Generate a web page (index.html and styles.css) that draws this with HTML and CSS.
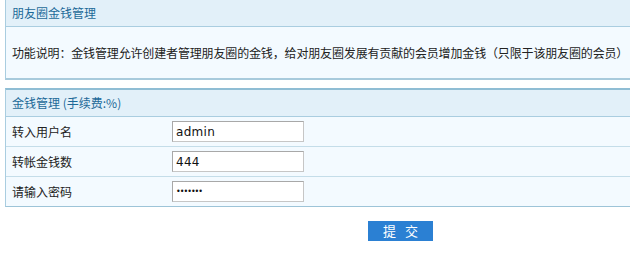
FILE: index.html
```html
<!DOCTYPE html>
<html lang="zh-CN">
<head>
<meta charset="utf-8">
<title>朋友圈金钱管理</title>
<link rel="stylesheet" href="styles.css">
</head>
<body>
<div class="page">
  <section class="panel panel-info">
    <div class="panel-head">朋友圈金钱管理</div>
    <div class="panel-body">功能说明：金钱管理允许创建者管理朋友圈的金钱，给对朋友圈发展有贡献的会员增加金钱（只限于该朋友圈的会员）</div>
  </section>
  <form class="panel panel-form">
    <div class="panel-head">金钱管理 (手续费:%)</div>
    <div class="row">
      <label class="label">转入用户名</label>
      <input class="field" type="text" value="admin">
    </div>
    <div class="row">
      <label class="label">转帐金钱数</label>
      <input class="field" type="text" value="444">
    </div>
    <div class="row row-last">
      <label class="label">请输入密码</label>
      <input class="field field-pass" type="password" value="1234567">
    </div>
  </form>
  <div class="actions">
    <button class="submit" type="button">提 交</button>
  </div>
</div>
</body>
</html>
```

FILE: styles.css
```css
html, body {
  margin: 0;
  padding: 0;
  overflow: hidden;
  background: #ffffff;
}
body {
  font-family: "Noto Sans CJK SC", "Noto Sans", sans-serif;
  font-size: 12px;
  color: #222;
}
.page {
  width: 625px;
  padding-left: 5px;
}
.panel {
  border-left: 1px solid #a9cde0;
  background: #f3faff;
  margin: 0;
}
.panel-head {
  height: 26px;
  line-height: 26px;
  padding-left: 6px;
  background: #e2f0f9;
  color: #1d6a98;
  border-bottom: 1px solid #a9cde0;
  white-space: nowrap;
}
.panel-info {
  border-bottom: 2px solid #a7cadc;
}
.panel-info .panel-body {
  height: 51px;
  line-height: 51px;
  padding-left: 6px;
  white-space: nowrap;
  color: #222;
  letter-spacing: -0.15px;
}
.panel-form {
  margin-top: 8px;
  border-top: 2px solid #8fbdd4;
  border-bottom: 1px solid #9dc4d8;
}
.row {
  display: flex;
  align-items: center;
  height: 29px;
  border-bottom: 1px solid #c4dde9;
}
.row-last {
  border-bottom: none;
}
.label {
  width: 160px;
  padding-left: 6px;
  color: #222;
}
.field {
  box-sizing: border-box;
  width: 132px;
  height: 21px;
  margin: 0;
  padding: 0 3px;
  border: 1px solid #c6c6c6;
  border-top-color: #a8a8a8;
  border-left-color: #a8a8a8;
  background: #fff;
  font-family: "DejaVu Sans", "Noto Sans", sans-serif;
  font-size: 12px;
  color: #111;
  letter-spacing: 0.3px;
}
.field-pass {
  font-size: 8px;
  letter-spacing: -1px;
}
.actions {
  display: flex;
  padding-top: 14px;
  padding-left: 363px;
}
.submit {
  width: 65px;
  height: 20px;
  margin: 0;
  padding: 0;
  border: none;
  background: #2b80d3;
  color: #fff;
  font-family: "Noto Sans CJK SC", sans-serif;
  font-size: 13px;
  line-height: 20px;
  letter-spacing: 3px;
  text-indent: 3px;
}
```
